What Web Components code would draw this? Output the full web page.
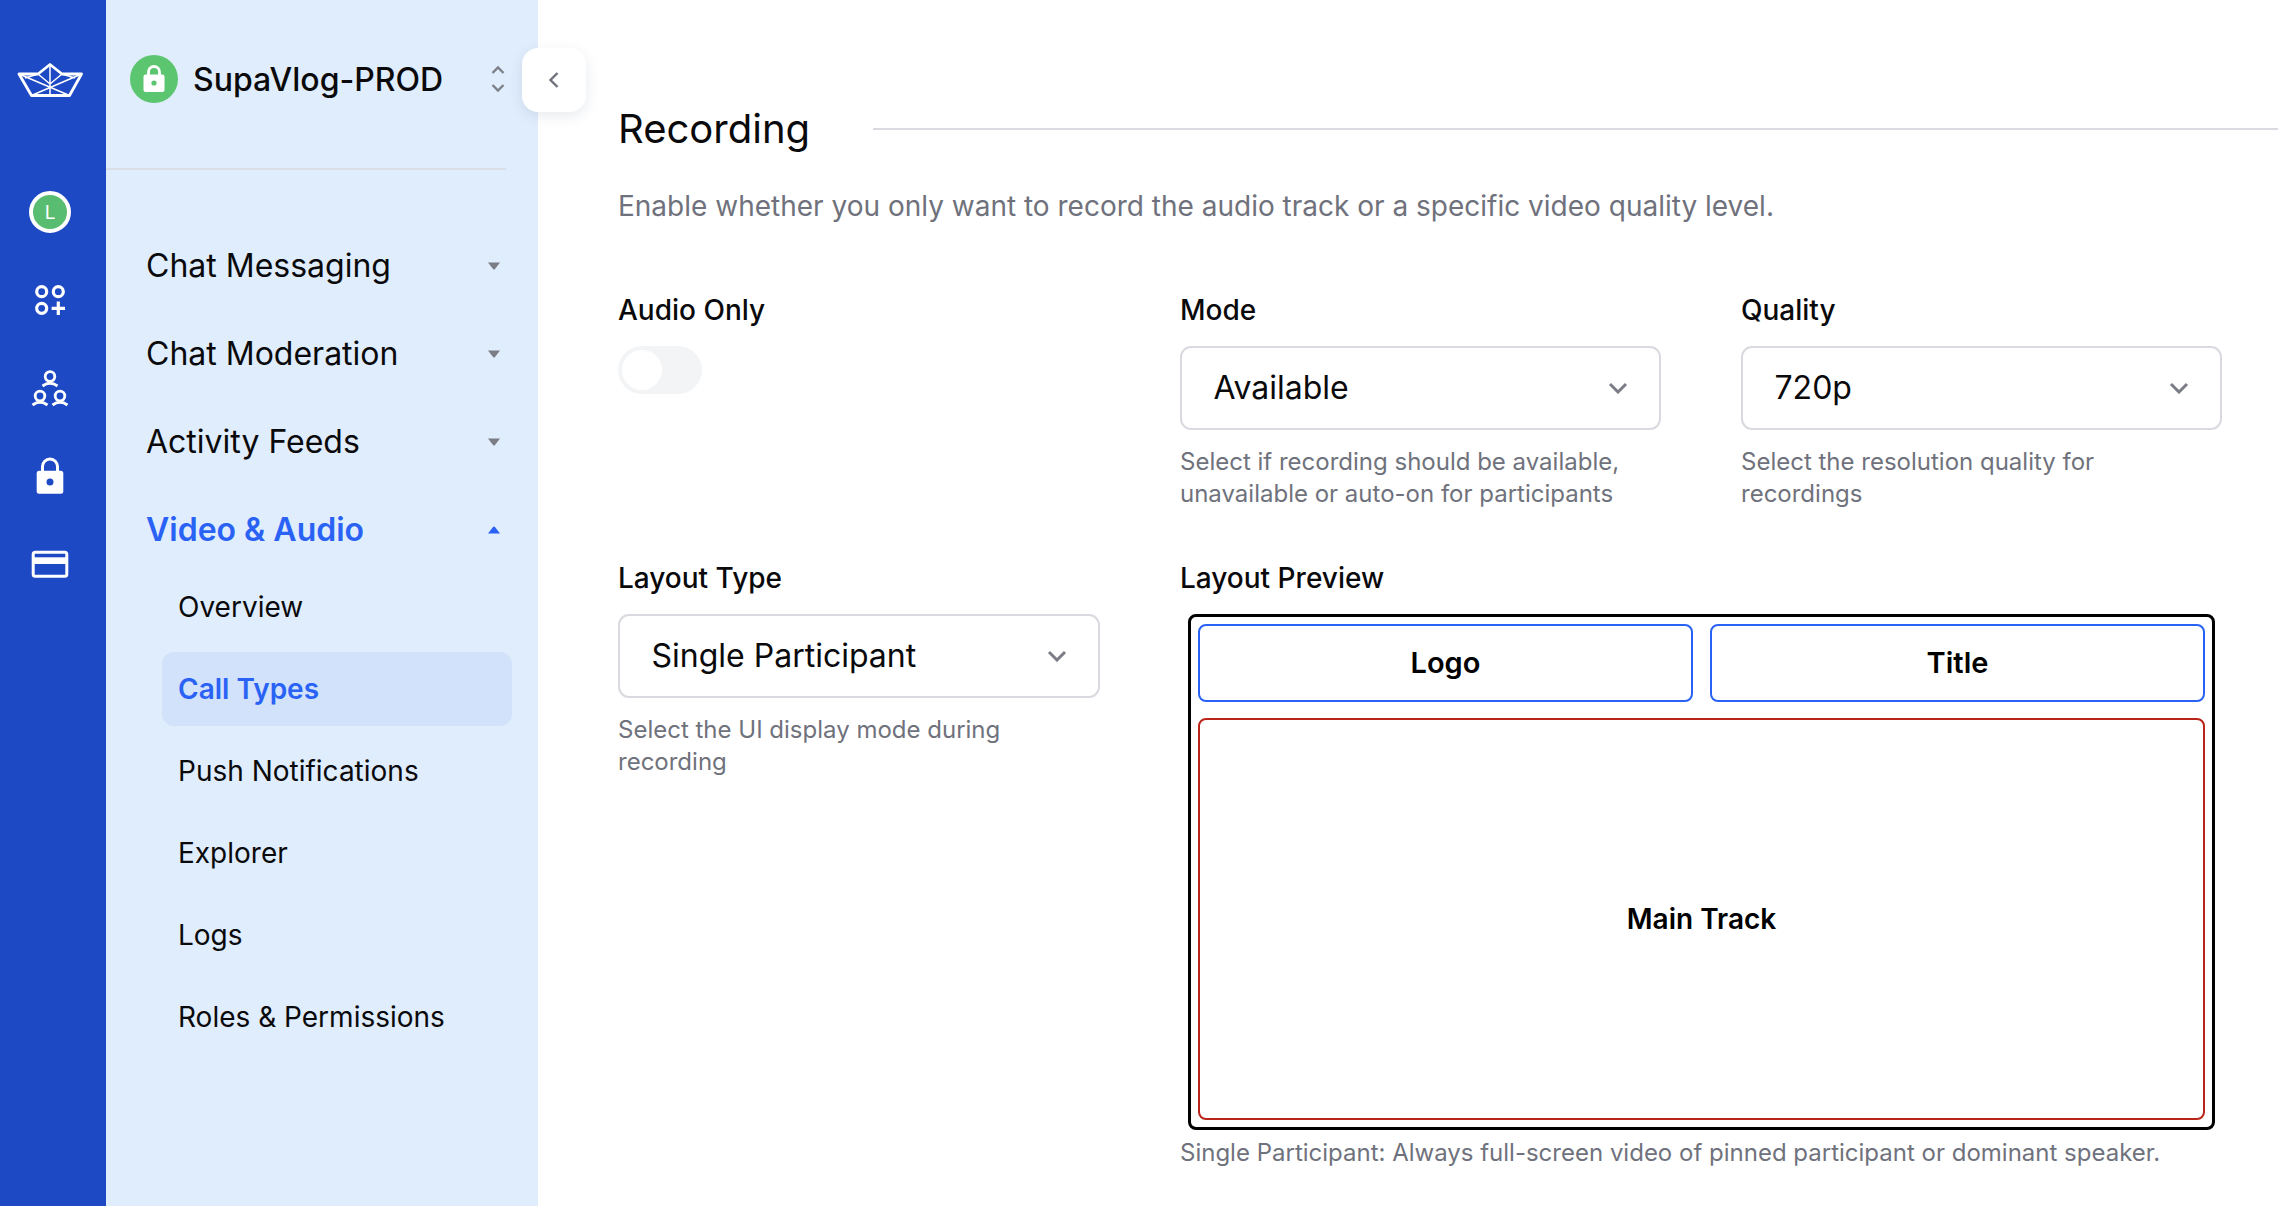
<!DOCTYPE html>
<html lang="en">
<head>
<meta charset="utf-8">
<title>Call Types</title>
<style>
  html, body { margin: 0; height: 100%; }
  body { font-family: Inter, "Liberation Sans", sans-serif; color: #0a0a0c; background: #fff; overflow: hidden; }
</style>
</head>
<body>
<app-shell>
  <icon-rail slot="rail"></icon-rail>
  <side-nav slot="nav" project="SupaVlog-PROD">
    <nav-group label="Chat Messaging"></nav-group>
    <nav-group label="Chat Moderation"></nav-group>
    <nav-group label="Activity Feeds"></nav-group>
    <nav-group label="Video &amp; Audio" open>
      <nav-link>Overview</nav-link>
      <nav-link active>Call Types</nav-link>
      <nav-link>Push Notifications</nav-link>
      <nav-link>Explorer</nav-link>
      <nav-link>Logs</nav-link>
      <nav-link>Roles &amp; Permissions</nav-link>
    </nav-group>
  </side-nav>
  <recording-section>
    <form-field label="Audio Only"><toggle-switch></toggle-switch></form-field>
    <form-field label="Mode" help="Select if recording should be available, unavailable or auto-on for participants"><select-box value="Available"></select-box></form-field>
    <form-field label="Quality" help="Select the resolution quality for recordings"><select-box value="720p"></select-box></form-field>
    <form-field label="Layout Type" help="Select the UI display mode during recording"><select-box value="Single Participant"></select-box></form-field>
    <form-field class="wide" label="Layout Preview" help="Single Participant: Always full-screen video of pinned participant or dominant speaker."><layout-preview></layout-preview></form-field>
  </recording-section>
</app-shell>

<script>
// small helper so each element just hands over its html and css
class Base extends HTMLElement {
  render(css, html) {
    const shadow = this.attachShadow({ mode: "open" });
    shadow.innerHTML = `<style>${css}</style>${html}`;
  }
}

class AppShell extends Base {
  connectedCallback() {
    this.render(`
      :host { display: flex; height: 1206px; width: 2278px; }
      .main { flex: 1; min-width: 0; }
    `, `
      <slot name="rail"></slot>
      <slot name="nav"></slot>
      <div class="main"><slot></slot></div>
    `);
  }
}

class IconRail extends Base {
  connectedCallback() {
    this.render(`
      :host { display: block; width: 106px; box-sizing: border-box; padding-right: 6px; flex: none; background: #1e49c4; color: #fff; }
      .logo { height: 160px; margin-bottom: 8px; display: flex; align-items: center; justify-content: center; }
      .item { height: 88px; display: flex; align-items: center; justify-content: center; }
      .avatar { width: 42px; height: 42px; box-sizing: border-box; border-radius: 50%; background: #58bd70; border: 4px solid #fff;
        display: flex; align-items: center; justify-content: center; font-size: 19px; font-weight: 400; }
      svg { display: block; }
    `, `
      <div class="logo">
        <svg width="80" height="50" viewBox="0 0 80 50" fill="none" stroke="#fff" stroke-linejoin="round">
          <path stroke-width="2.8" d="M9 19 L28 19 L40 9.5 L52 19 L71.5 19 L59.5 40.5 H21.5 Z"/>
          <path stroke-width="1.5" d="M40 9.5 V40.5 M9 19 L59.5 40.5 M71.5 19 L21.5 40.5 M28 19 L40 29 L52 19 M15 23 L28 19 M65 23 L52 19"/>
        </svg>
      </div>
      <div class="item"><div class="avatar">L</div></div>
      <div class="item">
        <svg width="40" height="40" viewBox="0 0 40 40" fill="none" stroke="#fff" stroke-width="3.2">
          <circle cx="11.7" cy="11.7" r="5"/><circle cx="28.3" cy="11.7" r="5"/><circle cx="11.7" cy="28.3" r="5"/>
          <path d="M28.3 21.6 V35 M21.6 28.3 H35"/>
        </svg>
      </div>
      <div class="item">
        <svg width="40" height="40" viewBox="0 0 40 40" fill="none" stroke="#fff" stroke-width="2.8">
          <circle cx="20" cy="8.5" r="4.8"/><path d="M12.5 18 Q20 12.5 27.5 18"/>
          <circle cx="10" cy="28" r="4.8"/><path d="M2.5 37 Q10 31.5 17.5 37"/>
          <circle cx="30" cy="28" r="4.8"/><path d="M22.5 37 Q30 31.5 37.5 37"/>
        </svg>
      </div>
      <div class="item">
        <svg width="40" height="40" viewBox="0 0 40 40">
          <path d="M12.5 16 V10.5 a7.5 7.5 0 0 1 15 0 V16" fill="none" stroke="#fff" stroke-width="3"/>
          <rect x="6.7" y="14.7" width="26.6" height="23" rx="2.5" fill="#fff"/>
          <circle cx="20" cy="26" r="3.5" fill="#1e49c4"/>
        </svg>
      </div>
      <div class="item">
        <svg width="40" height="40" viewBox="0 0 40 40" fill="none">
          <rect x="3.2" y="8.2" width="33.6" height="24" rx="2" stroke="#fff" stroke-width="3"/>
          <rect x="3" y="13.3" width="34" height="6.7" fill="#fff"/>
        </svg>
      </div>
    `);
  }
}

class SideNav extends Base {
  connectedCallback() {
    this.render(`
      :host { display: block; width: 432px; flex: none; background: #e0edfc; position: relative; }
      .head { height: 170px; margin-right: 32px; box-sizing: border-box; border-bottom: 2px solid #dadfe7;
        display: flex; align-items: center; padding: 0 1px 10px 24px; }
      .badge { width: 48px; height: 48px; border-radius: 50%; background: #5cc570; flex: none; display: flex; align-items: center; justify-content: center; }
      .name { margin-left: 15px; font-size: 32px; font-weight: 500; flex: 1; white-space: nowrap; }
      .updown { flex: none; }
      .list { padding-top: 52px; }
      .collapse { position: absolute; left: 416px; top: 48px; width: 64px; height: 64px; border-radius: 16px; background: #fff;
        box-shadow: 0 4px 14px rgba(30, 50, 90, .1); display: flex; align-items: center; justify-content: center; z-index: 2; }
      svg { display: block; }
    `, `
      <div class="head">
        <div class="badge">
          <svg width="24" height="30" viewBox="0 0 24 30">
            <path d="M6.5 12 V8 a5.5 5.5 0 0 1 11 0 V12" fill="none" stroke="#fff" stroke-width="2.8"/>
            <rect x="1.5" y="10.5" width="21" height="17.5" rx="2" fill="#fff"/>
            <circle cx="12" cy="19" r="2.6" fill="#5cc570"/>
          </svg>
        </div>
        <div class="name">${this.getAttribute("project")}</div>
        <svg class="updown" width="14" height="30" viewBox="0 0 14 30" fill="none" stroke="#7d8088" stroke-width="2.4">
          <path d="M1.5 9 L7 3.5 L12.5 9 M1.5 21 L7 26.5 L12.5 21"/>
        </svg>
      </div>
      <div class="collapse">
        <svg width="12" height="18" viewBox="0 0 12 18" fill="none" stroke="#6f727a" stroke-width="2.4"><path d="M9.5 2 L2.5 9 L9.5 16"/></svg>
      </div>
      <div class="list"><slot></slot></div>
    `);
  }
}

class NavGroup extends Base {
  connectedCallback() {
    const open = this.hasAttribute("open");
    this.render(`
      :host { display: block; }
      .top { height: 88px; box-sizing: border-box; padding: 0 37px 1px 40px; display: flex; align-items: center; justify-content: space-between;
        font-size: 32px; font-weight: 400; color: #0a0a0c; }
      :host([open]) .top { color: #2962f5; font-weight: 600; }
      :host([open]) .kids { margin-top: -4px; }
      svg { display: block; }
    `, `
      <div class="top"><span>${this.getAttribute("label")}</span>
        <svg width="14" height="8" viewBox="0 0 14 8"><path d="${open ? "M1 7.5 L6 1 Q7 0 8 1 L13 7.5 Z" : "M1 .5 H13 L8 7 Q7 8 6 7 Z"}" fill="${open ? "#2962f5" : "#7a7d85"}"/></svg>
      </div>
      <div class="kids"><slot></slot></div>
    `);
  }
}

class NavLink extends Base {
  connectedCallback() {
    this.render(`
      :host { display: flex; align-items: center; height: 74px; margin: 0 26px 8px 56px; padding-left: 16px; border-radius: 12px;
        font-size: 28px; font-weight: 400; color: #0a0a0c; }
      :host([active]) { background: #d1e2fa; color: #2962f5; font-weight: 600; }
    `, `<slot></slot>`);
  }
}

class RecordingSection extends Base {
  connectedCallback() {
    this.render(`
      :host { display: block; padding: 105px 0 0 80px; }
      .title { display: flex; align-items: center; height: 46px; font-size: 40px; font-weight: 400; color: #0a0a0c; }
      .title span { width: 255px; flex: none; }
      .title i { flex: 1; height: 2px; background: #d9dbe0; margin-top: 2px; }
      .lead { margin-top: 33px; font-size: 28px; line-height: 44px; color: #6f727c; }
      .grid { display: grid; grid-template-columns: 482px 481px 481px; column-gap: 80px; row-gap: 49px; margin-top: 63px; }
      ::slotted(.wide) { grid-column: span 2; }
    `, `
      <div class="title"><span>Recording</span><i></i></div>
      <div class="lead">Enable whether you only want to record the audio track or a specific video quality level.</div>
      <div class="grid"><slot></slot></div>
    `);
  }
}

class FormField extends Base {
  connectedCallback() {
    const help = this.getAttribute("help");
    this.render(`
      :host { display: block; }
      label { display: block; height: 38px; line-height: 38px; font-size: 28px; font-weight: 500; color: #0a0a0c; margin-bottom: 17px; }
      p { margin: 16px 0 0; font-size: 24px; line-height: 32px; color: #6f727c; }
    `, `
      <label>${this.getAttribute("label")}</label>
      <slot></slot>
      ${help ? `<p>${help}</p>` : ""}
    `);
  }
}

class ToggleSwitch extends Base {
  connectedCallback() {
    this.render(`
      :host { display: block; width: 84px; height: 48px; box-sizing: border-box; padding: 4px; border-radius: 24px; background: #f3f4f6; }
      i { display: block; width: 40px; height: 40px; border-radius: 50%; background: #fff; }
    `, `<i></i>`);
  }
}

class SelectBox extends Base {
  connectedCallback() {
    this.render(`
      :host { display: flex; align-items: center; justify-content: space-between; box-sizing: border-box; height: 84px; padding: 0 31px 1px 31.5px;
        border: 2px solid #d8dadf; border-radius: 11px; font-size: 32px; color: #0a0a0c; background: #fff; }
      svg { display: block; }
    `, `
      <span>${this.getAttribute("value")}</span>
      <svg width="20" height="12" viewBox="0 0 20 12" fill="none" stroke="#7a7d85" stroke-width="3"><path d="M2 2 L10 10 L18 2"/></svg>
    `);
  }
}

class LayoutPreview extends Base {
  connectedCallback() {
    this.render(`
      :host { display: grid; grid-template-columns: 1fr 1fr; grid-template-rows: 78px 1fr; gap: 16px 17px; box-sizing: border-box;
        height: 516px; margin: 0 7px -9px 8px; padding: 7px 7px 7px 7px; border: 3px solid #000; border-radius: 8px; }
      div { display: flex; align-items: center; justify-content: center; box-sizing: border-box; border: 2px solid #2962f5; border-radius: 8px;
        font-size: 29px; font-weight: 600; color: #000; padding-bottom: 1px; }
      .track { grid-column: span 2; border-color: #bb2419; font-size: 28px; padding-bottom: 0; }
    `, `
      <div>Logo</div><div>Title</div><div class="track">Main Track</div>
    `);
  }
}

customElements.define("app-shell", AppShell);
customElements.define("icon-rail", IconRail);
customElements.define("side-nav", SideNav);
customElements.define("nav-group", NavGroup);
customElements.define("nav-link", NavLink);
customElements.define("recording-section", RecordingSection);
customElements.define("form-field", FormField);
customElements.define("toggle-switch", ToggleSwitch);
customElements.define("select-box", SelectBox);
customElements.define("layout-preview", LayoutPreview);
</script>
</body>
</html>
